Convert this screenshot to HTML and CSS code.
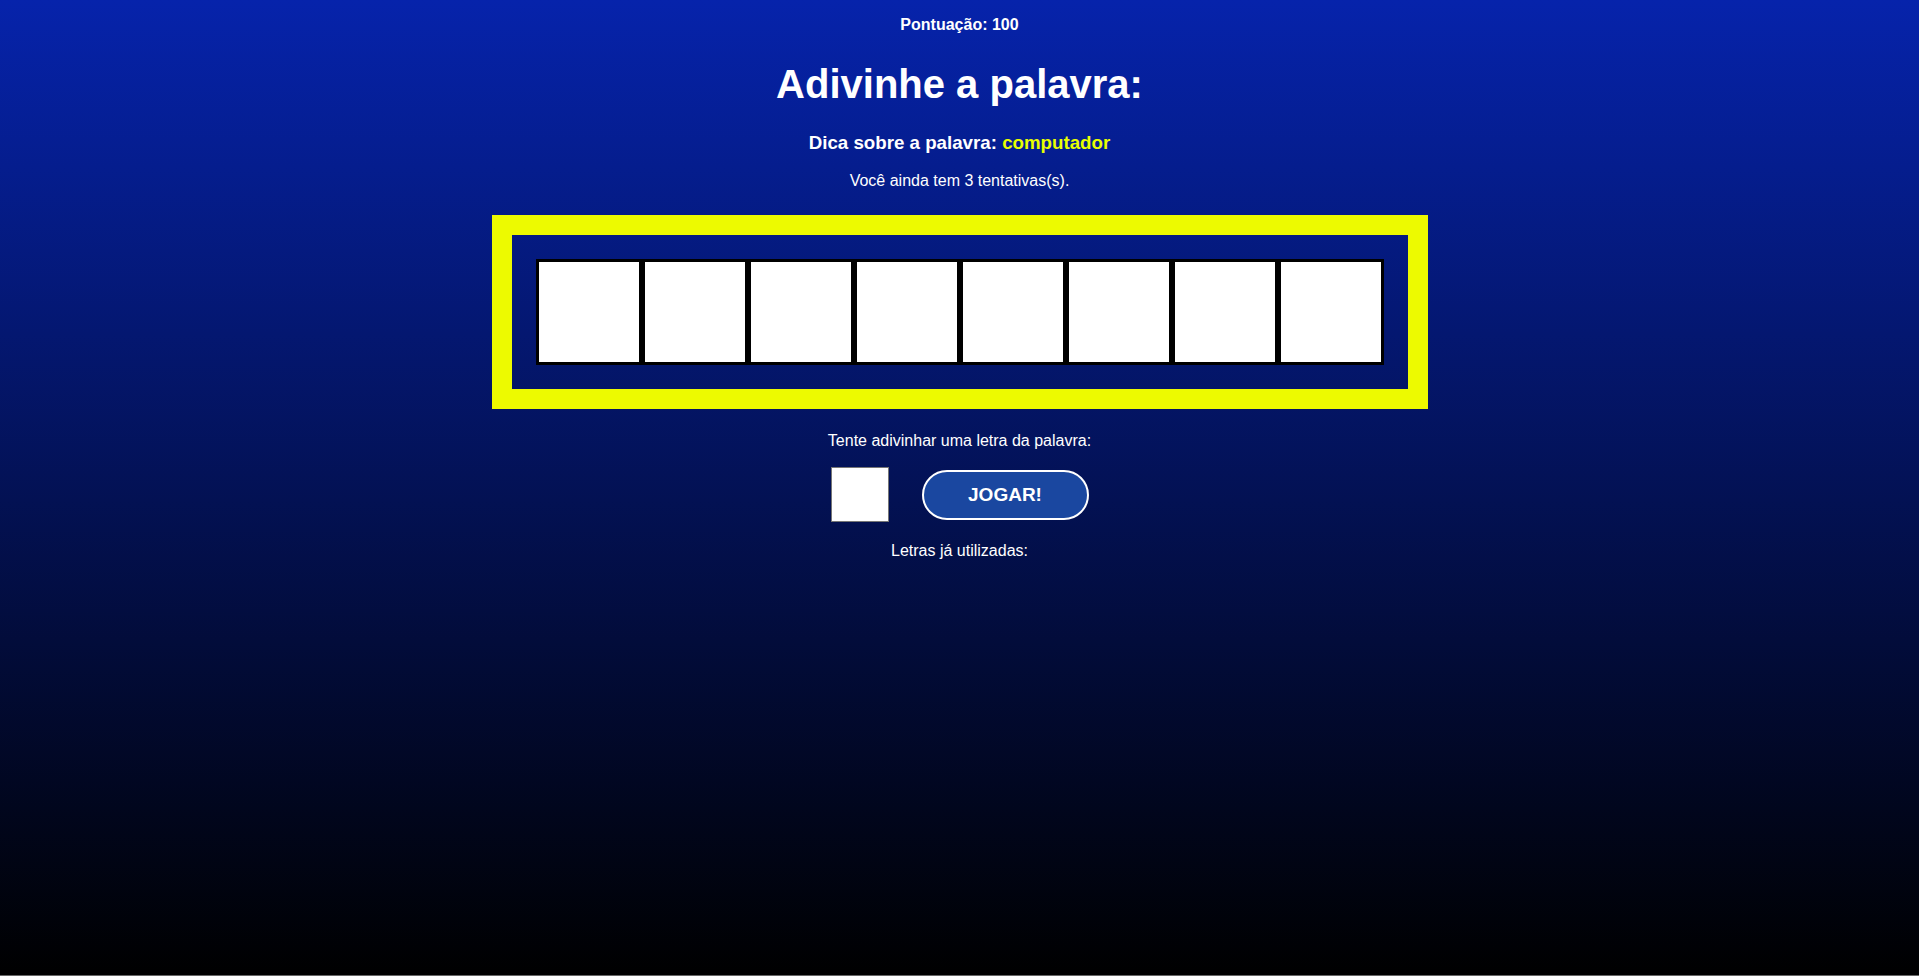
FILE: index.html
```html
<!DOCTYPE html>
<html lang="pt-BR">
<head>
<meta charset="utf-8">
<title>Adivinhe a palavra</title>
<link rel="stylesheet" href="styles.css">
</head>
<body>
<main class="game">
  <p class="score">Pontuação: 100</p>
  <h1 class="title">Adivinhe a palavra:</h1>
  <h3 class="hint">Dica sobre a palavra: <span class="hint-word">computador</span></h3>
  <p class="tries">Você ainda tem 3 tentativas(s).</p>
  <div class="board">
    <div class="tiles">
      <div class="tile"></div>
      <div class="tile"></div>
      <div class="tile"></div>
      <div class="tile"></div>
      <div class="tile"></div>
      <div class="tile"></div>
      <div class="tile"></div>
      <div class="tile"></div>
    </div>
  </div>
  <p class="prompt">Tente adivinhar uma letra da palavra:</p>
  <div class="controls">
    <input class="letter" type="text" maxlength="1">
    <button class="play" type="button">JOGAR!</button>
  </div>
  <p class="used">Letras já utilizadas:</p>
</main>
</body>
</html>
```
FILE: styles.css
```css
html {
  background: #666;
}
body {
  margin: 0;
  height: 975px;
  background: linear-gradient(to bottom, #0623ab 0%, #000 100%);
  font-family: "Liberation Sans", Arial, sans-serif;
  color: #fff;
}
.game {
  display: flex;
  flex-direction: column;
  align-items: center;
  padding-top: 16px;
}
.score {
  margin: 0;
  font-size: 16px;
  font-weight: bold;
}
.title {
  margin: 28px 0 0;
  font-size: 40px;
  font-weight: bold;
}
.hint {
  margin: 25px 0 0;
  font-size: 18.72px;
  font-weight: bold;
}
.hint-word {
  color: #e8ff00;
}
.tries {
  margin: 18px 0 0;
  font-size: 16px;
}
.board {
  margin-top: 25px;
  border: 20px solid #edfa00;
  padding: 24px;
}
.tiles {
  display: flex;
}
.tile {
  width: 100px;
  height: 100px;
  border: 3px solid #000;
  background: #fff;
}
.prompt {
  margin: 23px 0 0;
  font-size: 16px;
}
.controls {
  display: flex;
  align-items: center;
  gap: 33px;
  margin-top: 17px;
}
.letter {
  box-sizing: border-box;
  width: 58px;
  height: 55px;
  margin: 0;
  border: 1px solid #767676;
  background: #fff;
  padding: 0;
  font-size: 24px;
  text-align: center;
}
.play {
  box-sizing: border-box;
  width: 167px;
  height: 50px;
  margin: 0;
  border: 2px solid #fff;
  border-radius: 25px;
  background: #1a47a0;
  color: #fff;
  font-family: "Liberation Sans", Arial, sans-serif;
  font-size: 19px;
  font-weight: bold;
}
.used {
  margin: 20px 0 0;
  font-size: 16px;
}
```
